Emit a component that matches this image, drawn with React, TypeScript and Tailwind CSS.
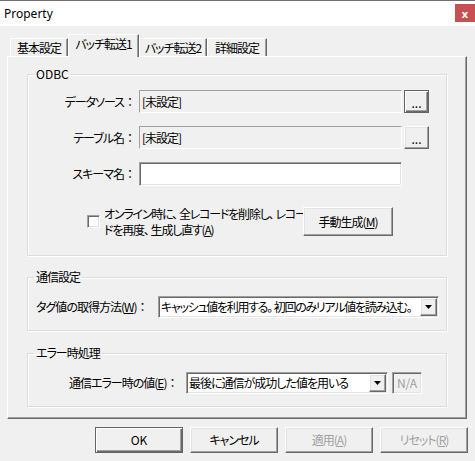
import React from "react";

const raised =
  "bg-[#f0f0f0] border border-t-white border-l-white border-r-[#696969] border-b-[#696969] shadow-[inset_-1px_-1px_0_#a0a0a0,inset_1px_1px_0_#e3e3e3]";
const defBtn =
  "bg-[#f0f0f0] border border-[#646464] shadow-[inset_1px_1px_0_#fff,inset_-1px_-1px_0_#696969,inset_-2px_-2px_0_#a0a0a0]";
const sunken =
  "border border-t-[#a0a0a0] border-l-[#a0a0a0] border-r-white border-b-white shadow-[inset_1px_1px_0_#696969,inset_-1px_-1px_0_#e3e3e3]";
const staticEdge =
  "border border-t-[#a0a0a0] border-l-[#a0a0a0] border-r-white border-b-white bg-[#f0f0f0]";
const group =
  "w-[420px] h-[62px] m-0 p-0 min-w-0 border border-[#dcdcdc] shadow-[1px_1px_0_#fff,inset_1px_1px_0_#fff]";

/* full-width punctuation (not proportional) */
function F({ c }: { c: string }) {
  return <span className="[font-feature-settings:normal] tracking-normal">{c}</span>;
}
/* narrow punctuation with a little extra space */
function H({ c }: { c: string }) {
  return <span className="mr-[2px]">{c}</span>;
}

function Arrow() {
  return (
    <div className={`w-[17px] h-full shrink-0 flex items-center justify-center ${raised}`}>
      <svg width="7" height="4" viewBox="0 0 7 4">
        <polygon points="0,0 7,0 3.5,4" fill="#000" />
      </svg>
    </div>
  );
}

function Tab({ label, active, w }: { label: string; active?: boolean; w: string }) {
  if (active) {
    return (
      <div
        className={`relative z-10 -mb-px h-[23px] ${w} bg-[#f0f0f0] border border-b-0 border-t-white border-l-white border-r-[#696969] shadow-[inset_-1px_0_0_#a0a0a0] flex justify-center pt-[1px] leading-[16px]`}
      >
        {label}
      </div>
    );
  }
  return (
    <div
      className={`h-[18px] ${w} bg-[#f0f0f0] border border-b-0 border-t-white border-l-white border-r-[#696969] shadow-[inset_-1px_0_0_#a0a0a0] flex items-center justify-center leading-[16px]`}
    >
      {label}
    </div>
  );
}

export default function App() {
  return (
    <div className="w-[475px] h-[461px] bg-[#f0f0f0] border-t border-[#707070] flex flex-col text-[12px] tracking-[-1px] text-black overflow-hidden font-['Meiryo_UI','Noto_Sans_CJK_JP',sans-serif] [font-feature-settings:'palt']">
      {/* Title bar */}
      <div className="h-[25px] bg-white flex items-start justify-between">
        <span className="pl-[4px] pt-[5px] leading-[16px] text-[12px] tracking-normal font-['Segoe_UI','Noto_Sans',sans-serif]">
          Property
        </span>
        <div className="mt-[3px] w-[20px] h-[18px] bg-[#c75050] text-white flex items-center justify-center text-[11px] font-bold leading-none tracking-normal font-['Noto_Sans',sans-serif]">
          x
        </div>
      </div>

      {/* Body */}
      <div className="flex flex-col pt-[8px] px-[7px]">
        {/* Tabs */}
        <div className="flex items-end h-[22px] pl-[3px]">
          <Tab label="基本設定" w="w-[58px]" />
          <Tab label="バッチ転送1" w="w-[71px]" active />
          <Tab label="バッチ転送2" w="w-[68px]" />
          <Tab label="詳細設定" w="w-[60px]" />
        </div>

        {/* Panel */}
        <div className="w-[460px] h-[363px] border border-t-white border-l-white border-r-[#696969] border-b-[#696969] shadow-[inset_-1px_-1px_0_#a0a0a0] pl-[19px] pt-[9px] flex flex-col">
          {/* ODBC */}
          <fieldset className="w-[420px] h-[190px] m-0 p-0 min-w-0 border border-[#dcdcdc] shadow-[1px_1px_0_#fff,inset_1px_1px_0_#fff]">
            <legend className="ml-[6px] px-[2px] leading-[16px] tracking-normal">ODBC</legend>
            <div className="mt-[8px] flex flex-col gap-[13px]">
              <div className="flex items-center h-[23px]">
                <span className="w-[108px] text-right whitespace-nowrap">
                  データソース<F c="：" />
                </span>
                <div className={`ml-[3px] w-[263px] h-[23px] ${staticEdge} flex items-center pl-[2px]`}>[未設定]</div>
                <div className={`ml-[2px] w-[25px] h-[23px] ${defBtn} flex items-center justify-center leading-none pt-[3px] tracking-normal`}>...</div>
              </div>
              <div className="flex items-center h-[23px]">
                <span className="w-[108px] text-right whitespace-nowrap">
                  テーブル名<F c="：" />
                </span>
                <div className={`ml-[3px] w-[263px] h-[23px] ${staticEdge} flex items-center pl-[2px]`}>[未設定]</div>
                <div className={`ml-[2px] w-[25px] h-[23px] ${raised} flex items-center justify-center leading-none pt-[3px] tracking-normal`}>...</div>
              </div>
              <div className="flex items-center h-[23px]">
                <span className="w-[108px] text-right whitespace-nowrap">
                  スキーマ名<F c="：" />
                </span>
                <div className={`ml-[3px] w-[263px] h-[24px] bg-white ${sunken}`} />
              </div>
            </div>
            <div className="mt-[22px] flex items-center h-[29px]">
              <div className={`ml-[59px] w-[13px] h-[13px] bg-white ${sunken}`} />
              <div className="ml-[4px] w-[195px] leading-[16px] whitespace-nowrap tracking-[-1.2px]">
                <div>
                  オンライン時に<H c="、" />全レコードを削除し<H c="、" />レコー
                </div>
                <div>
                  ドを再度<H c="、" />生成し直す(<span className="underline">A</span>)
                </div>
              </div>
              <div className={`ml-[4px] w-[90px] h-[29px] ${raised} flex items-center justify-center`}>
                <span>
                  手動生成(<span className="underline">M</span>)
                </span>
              </div>
            </div>
          </fieldset>

          {/* 通信設定 */}
          <fieldset className={`mt-[13px] ${group}`}>
            <legend className="ml-[6px] px-[2px] leading-[16px]">通信設定</legend>
            <div className="mt-[11px] flex items-center h-[22px]">
              <span className="ml-[8px] w-[122px] whitespace-nowrap">
                タグ値の取得方法(<span className="underline">W</span>)<F c="：" />
              </span>
              <div className={`w-[281px] h-[22px] bg-white ${sunken} flex items-center justify-between pl-[2px] pr-[1px] py-[1px]`}>
                <span className="whitespace-nowrap overflow-hidden tracking-[-1.3px]">
                  キャッシュ値を利用する<H c="。" />初回のみリアル値を読み込む<H c="。" />
                </span>
                <Arrow />
              </div>
            </div>
          </fieldset>

          {/* エラー時処理 */}
          <fieldset className={`mt-[14px] ${group}`}>
            <legend className="ml-[6px] px-[2px] leading-[16px]">エラー時処理</legend>
            <div className="mt-[11px] flex items-center h-[22px]">
              <span className="ml-[41px] w-[117px] whitespace-nowrap">
                通信エラー時の値(<span className="underline">E</span>)<F c="：" />
              </span>
              <div className={`w-[202px] h-[22px] bg-white ${sunken} flex items-center justify-between pl-[2px] pr-[1px] py-[1px]`}>
                <span className="whitespace-nowrap">最後に通信が成功した値を用いる</span>
                <Arrow />
              </div>
              <div className={`ml-[4px] w-[30px] h-[22px] bg-[#f0f0f0] ${sunken} flex items-center justify-center text-[#a0a0a0] tracking-normal`}>
                N/A
              </div>
            </div>
          </fieldset>
        </div>

        {/* Bottom buttons */}
        <div className="mt-[8px] flex justify-end gap-[7px]">
          <div className={`w-[88px] h-[26px] ${defBtn} flex items-center justify-center tracking-normal`}>OK</div>
          <div className={`w-[88px] h-[26px] ${raised} flex items-center justify-center`}>キャンセル</div>
          <div className={`w-[88px] h-[26px] ${raised} flex items-center justify-center text-[#a0a0a0]`}>
            <span>
              適用(<span className="underline">A</span>)
            </span>
          </div>
          <div className={`w-[88px] h-[26px] ${raised} flex items-center justify-center text-[#a0a0a0]`}>
            <span>
              リセット(<span className="underline">R</span>)
            </span>
          </div>
        </div>
      </div>
    </div>
  );
}
